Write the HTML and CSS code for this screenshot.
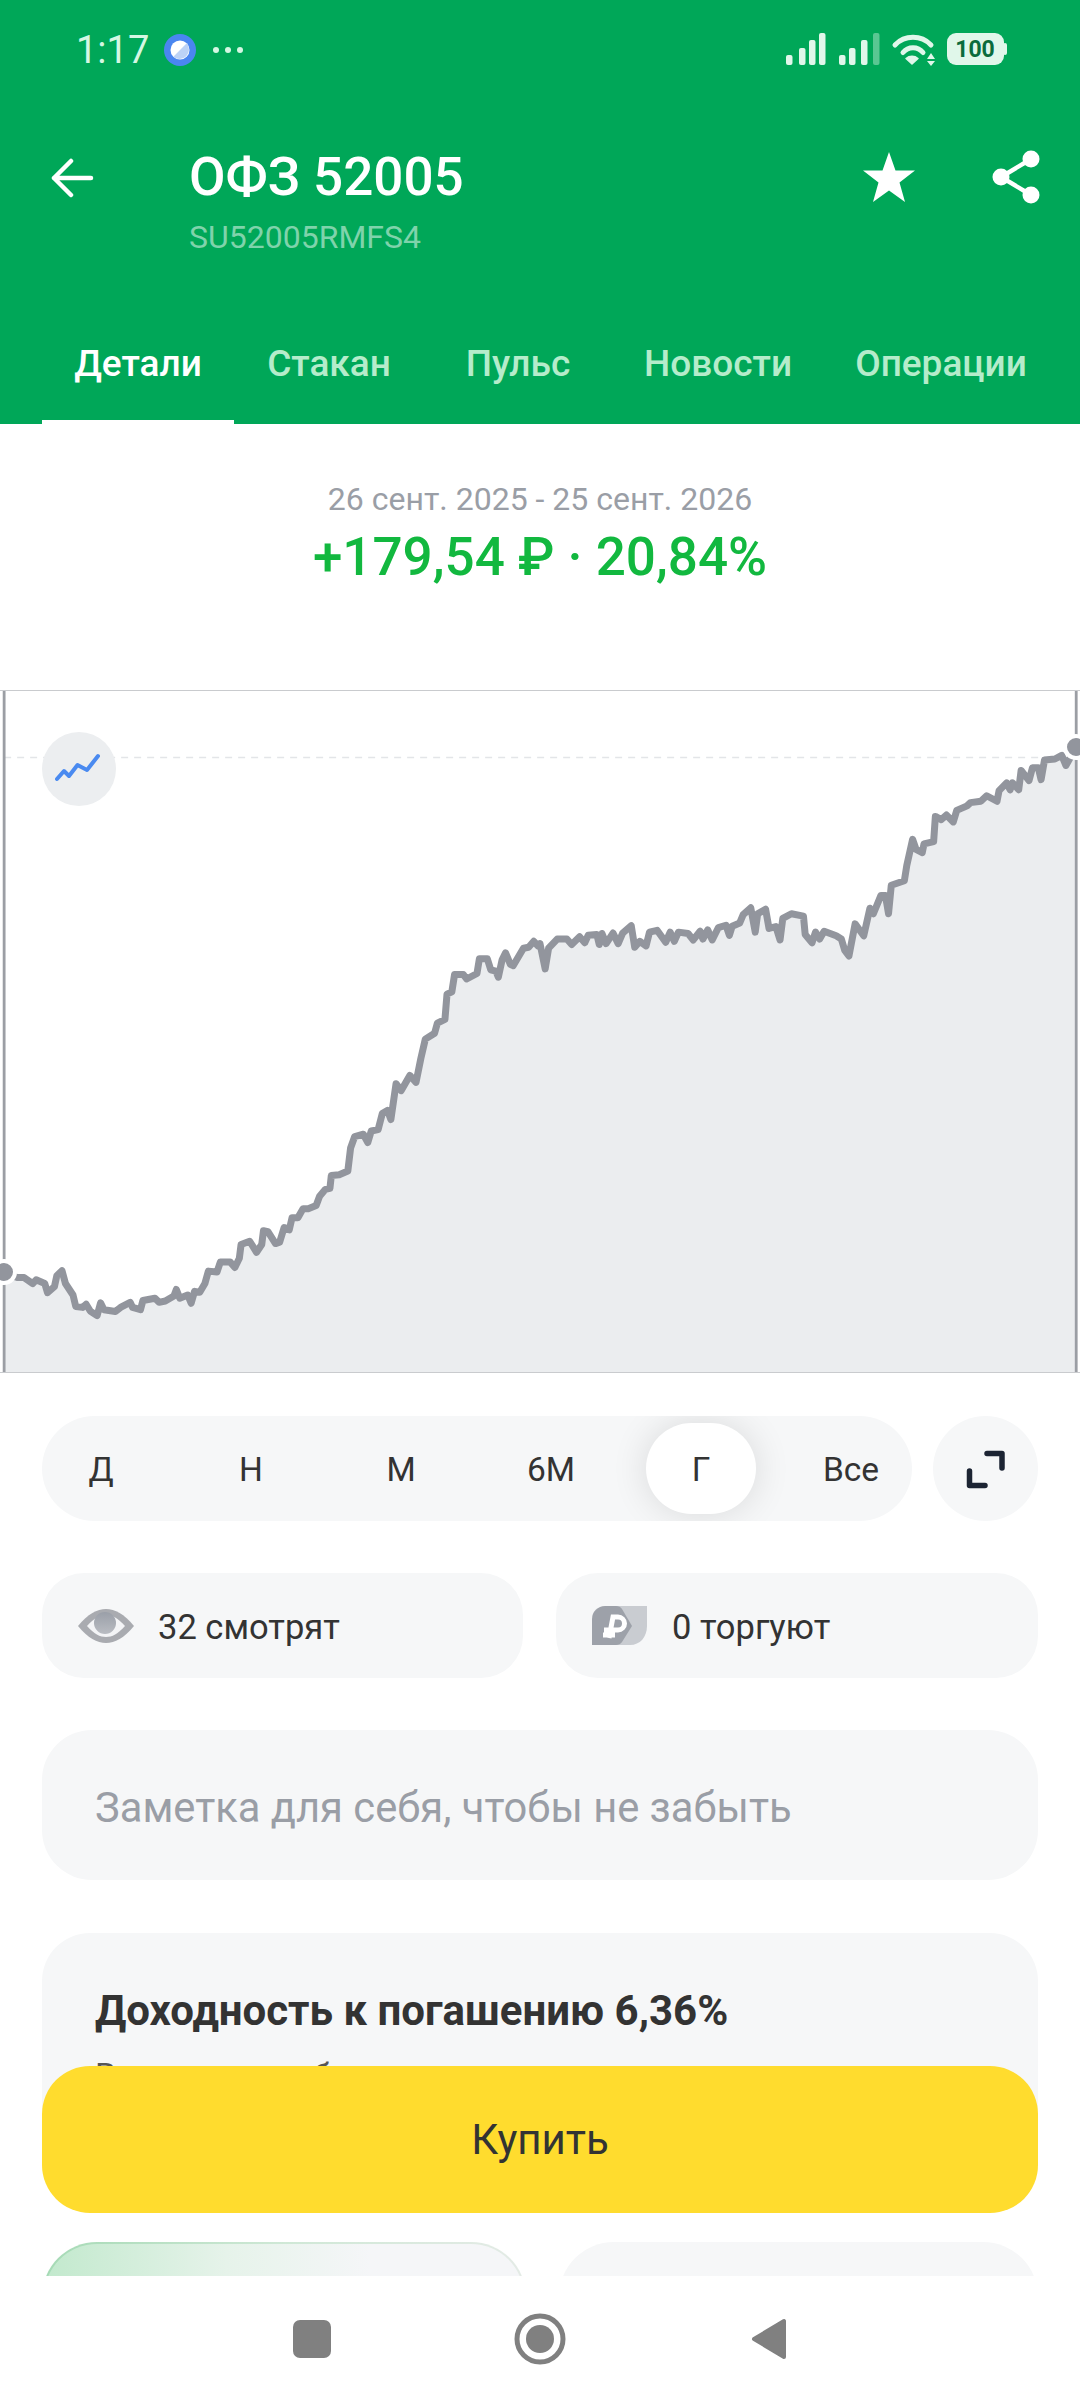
FILE: index.html
```html
<!DOCTYPE html>
<html lang="ru">
<head>
    <meta charset="UTF-8">
    <meta name="viewport" content="width=device-width, initial-scale=1.0">
    <title>ОФЗ 52005</title>
    <link rel="stylesheet" href="styles.css">
</head>
<body>
    <div class="screen">
        <div class="main">
            <header class="header">
                <div class="statusbar">
                    <div class="status-left">
                        <span class="clock">1:17</span>
                        <svg class="status-app" width="32" height="32" viewBox="0 0 32 32">
                            <circle cx="16" cy="16" r="16" fill="#4a86f0"/>
                            <circle cx="16" cy="16" r="9.5" fill="#fff"/>
                            <path d="M22.7 9.3A9.5 9.5 0 0 1 9.3 22.7Z" fill="#bcd2f6"/>
                        </svg>
                        <svg class="status-dots" width="32" height="8" viewBox="0 0 32 8">
                            <circle cx="4" cy="4" r="3" fill="#d5f7e3"/>
                            <circle cx="16" cy="4" r="3" fill="#d5f7e3"/>
                            <circle cx="28" cy="4" r="3" fill="#d5f7e3"/>
                        </svg>
                    </div>
                    <svg width="280" height="60" viewBox="0 0 280 60">
                        <g fill="#e0f7ea">
                            <rect x="26" y="35" width="6.5" height="10" rx="2"/>
                            <rect x="39" y="28" width="6.5" height="17" rx="2"/>
                            <rect x="49" y="20" width="6.5" height="25" rx="2"/>
                            <rect x="59" y="13" width="6.5" height="32" rx="2"/>
                            <rect x="79" y="35" width="6.5" height="10" rx="2"/>
                            <rect x="89" y="28" width="6.5" height="17" rx="2"/>
                            <rect x="101" y="20" width="6.5" height="25" rx="2"/>
                            <rect x="113" y="13" width="6.5" height="32" rx="2" opacity=".4"/>
                            <path d="M152 44 146 38.500A9.500 9.500 0 0 1 158 38.500Z" stroke="#e0f7ea" stroke-width="1.500" stroke-linejoin="round"/>
                            <path d="M167 39 171 33 175 39ZM167 41H175L171 46Z"/>
                            <rect x="187" y="13" width="57" height="32" rx="9"/>
                            <rect x="243" y="23" width="4" height="12" rx="2"/>
                        </g>
                        <g fill="none" stroke="#e0f7ea" stroke-width="5" stroke-linecap="round">
                            <path d="M135 25A25 25 0 0 1 171 25"/>
                            <path d="M143 32.500A13 13 0 0 1 163 32.500"/>
                        </g>
                        <text class="battery-level" x="215" y="37">100</text>
                    </svg>
                </div>

                <div class="title-row">
                    <svg class="back" width="44" height="40" viewBox="0 0 44 40">
                        <path d="M4 20H41M21 3 4 20 21 37" fill="none" stroke="#fff" stroke-width="4.500" stroke-linecap="round" stroke-linejoin="round"/>
                    </svg>
                    <div class="title-text">
                        <h1>ОФЗ 52005</h1>
                        <p>SU52005RMFS4</p>
                    </div>
                    <div class="actions">
                        <svg class="star" width="52" height="50" viewBox="0 0 52 50">
                            <path d="M26 0 32.500 18.500H52L36.500 30.500 42 50 26 38.500 10 50 15.500 30.500 0 18.500H19.500Z" fill="#fff"/>
                        </svg>
                        <svg width="48" height="54" viewBox="0 0 48 54">
                            <g fill="#fff">
                                <circle cx="39" cy="9" r="8.500"/>
                                <circle cx="9" cy="27" r="8.500"/>
                                <circle cx="39" cy="45" r="8.500"/>
                            </g>
                            <path d="M39 9 9 27 39 45" fill="none" stroke="#fff" stroke-width="4.500"/>
                        </svg>
                    </div>
                </div>

                <nav class="tabs">
                    <a class="tab active">Детали</a>
                    <a class="tab">Стакан</a>
                    <a class="tab">Пульс</a>
                    <a class="tab">Новости</a>
                    <a class="tab">Операции</a>
                </nav>
            </header>

            <section class="range">
                <div class="range-dates">26 сент. 2025 - 25 сент. 2026</div>
                <div class="range-value">+179,54 ₽ · 20,84%</div>
            </section>

            <section class="chart">
                <svg class="chart-plot" width="1080" height="683" viewBox="0 45 3136 1487" preserveAspectRatio="none">
                    <path class="chart-area" d="M12 1312L50 1322L70 1322L95 1335L105 1327L130 1335L138 1355L158 1342L165 1318L180 1307L190 1335L212 1360L220 1385L240 1387L250 1380L262 1395L282 1405L292 1377L302 1392L335 1396L350 1387L378 1376L385 1387L408 1392L415 1372L450 1367L462 1376L480 1373L505 1362L512 1348L522 1367L545 1360L555 1378L565 1352L580 1354L595 1335L605 1308L630 1310L640 1288L668 1288L682 1300L695 1280L700 1250L725 1243L745 1267L760 1250L765 1220L778 1222L800 1248L812 1245L825 1213L840 1218L848 1192L865 1192L880 1172L895 1172L918 1165L928 1145L945 1130L958 1128L962 1100L985 1098L1010 1090L1018 1040L1030 1015L1055 1010L1068 1028L1078 1003L1098 1000L1110 965L1125 958L1135 978L1150 900L1165 915L1190 882L1208 897L1222 845L1235 803L1262 790L1270 768L1292 760L1298 705L1312 700L1320 662L1345 662L1355 672L1385 660L1392 628L1415 628L1425 652L1440 655L1447 668L1458 630L1468 615L1482 640L1490 643L1520 605L1535 603L1550 590L1562 600L1568 595L1583 650L1593 605L1618 585L1646 585L1660 597L1683 580L1698 593L1708 577L1733 575L1740 597L1748 573L1760 595L1780 572L1795 595L1808 572L1833 556L1843 603L1858 590L1876 600L1886 570L1908 566L1933 592L1946 570L1958 590L1970 570L1998 573L2013 587L2033 568L2041 585L2055 565L2068 587L2086 560L2108 555L2118 577L2126 557L2148 550L2158 532L2180 517L2193 570L2200 530L2223 520L2233 562L2253 558L2265 587L2273 540L2298 530L2333 535L2338 575L2358 593L2368 570L2380 585L2393 568L2428 578L2443 585L2453 610L2465 622L2483 552L2508 578L2526 518L2536 530L2558 490L2571 490L2580 530L2588 468L2626 458L2633 425L2650 368L2660 390L2678 397L2683 378L2711 373L2716 318L2733 325L2748 315L2768 330L2778 305L2808 295L2818 288L2848 285L2865 273L2895 285L2901 262L2923 245L2933 260L2940 245L2958 260L2965 218L2988 240L2998 212L3015 212L3023 238L3033 195L3063 193L3083 185L3095 207L3108 190L3123 170V1531H12Z"/>
                    <path class="chart-guide" d="M12 190H3125"/>
                    <path class="chart-axis" d="M12 45V1531M3125 45V1531"/>
                    <path class="chart-line" d="M12 1312L50 1322L70 1322L95 1335L105 1327L130 1335L138 1355L158 1342L165 1318L180 1307L190 1335L212 1360L220 1385L240 1387L250 1380L262 1395L282 1405L292 1377L302 1392L335 1396L350 1387L378 1376L385 1387L408 1392L415 1372L450 1367L462 1376L480 1373L505 1362L512 1348L522 1367L545 1360L555 1378L565 1352L580 1354L595 1335L605 1308L630 1310L640 1288L668 1288L682 1300L695 1280L700 1250L725 1243L745 1267L760 1250L765 1220L778 1222L800 1248L812 1245L825 1213L840 1218L848 1192L865 1192L880 1172L895 1172L918 1165L928 1145L945 1130L958 1128L962 1100L985 1098L1010 1090L1018 1040L1030 1015L1055 1010L1068 1028L1078 1003L1098 1000L1110 965L1125 958L1135 978L1150 900L1165 915L1190 882L1208 897L1222 845L1235 803L1262 790L1270 768L1292 760L1298 705L1312 700L1320 662L1345 662L1355 672L1385 660L1392 628L1415 628L1425 652L1440 655L1447 668L1458 630L1468 615L1482 640L1490 643L1520 605L1535 603L1550 590L1562 600L1568 595L1583 650L1593 605L1618 585L1646 585L1660 597L1683 580L1698 593L1708 577L1733 575L1740 597L1748 573L1760 595L1780 572L1795 595L1808 572L1833 556L1843 603L1858 590L1876 600L1886 570L1908 566L1933 592L1946 570L1958 590L1970 570L1998 573L2013 587L2033 568L2041 585L2055 565L2068 587L2086 560L2108 555L2118 577L2126 557L2148 550L2158 532L2180 517L2193 570L2200 530L2223 520L2233 562L2253 558L2265 587L2273 540L2298 530L2333 535L2338 575L2358 593L2368 570L2380 585L2393 568L2428 578L2443 585L2453 610L2465 622L2483 552L2508 578L2526 518L2536 530L2558 490L2571 490L2580 530L2588 468L2626 458L2633 425L2650 368L2660 390L2678 397L2683 378L2711 373L2716 318L2733 325L2748 315L2768 330L2778 305L2808 295L2818 288L2848 285L2865 273L2895 285L2901 262L2923 245L2933 260L2940 245L2958 260L2965 218L2988 240L2998 212L3015 212L3023 238L3033 195L3063 193L3083 185L3095 207L3108 190L3123 170"/>
                </svg>
                <span class="chart-dot chart-dot-start"></span>
                <span class="chart-dot chart-dot-end"></span>
                <span class="chart-type">
                    <svg width="74" height="74" viewBox="0 0 74 74">
                        <path d="M15 47 22 39 27 44 35.500 33 45 38 56 24" fill="none" stroke="#4a8af0" stroke-width="4" stroke-linecap="round" stroke-linejoin="round"/>
                    </svg>
                </span>
            </section>

            <div class="periods-row">
                <div class="periods">
                    <span class="period">Д</span>
                    <span class="period">Н</span>
                    <span class="period">М</span>
                    <span class="period">6М</span>
                    <span class="period selected">Г</span>
                    <span class="period">Все</span>
                </div>
                <div class="expand">
                    <svg width="40" height="40" viewBox="0 0 40 40">
                        <path d="M21 4.500H36V19M3.500 22V36.500H19" fill="none" stroke="#1c2433" stroke-width="5.500" stroke-linecap="round" stroke-linejoin="round"/>
                    </svg>
                </div>
            </div>

            <div class="stats">
                <div class="stat">
                    <svg width="58" height="36" viewBox="0 0 58 36">
                        <defs>
                            <linearGradient id="pupil" x1="0" y1="0" x2="0" y2="1">
                                <stop offset="0" stop-color="#9a9fa8"/>
                                <stop offset="1" stop-color="#b9bcc2"/>
                            </linearGradient>
                        </defs>
                        <path d="M1 18C11 6 20 1 29 1S47 6 57 18C47 30 38 35 29 35S11 30 1 18Z" fill="#a9abb0"/>
                        <path d="M10 18C17 10 23 7 29 7S41 10 48 18C41 26 35 29 29 29S17 26 10 18Z" fill="#f3f4f6"/>
                        <circle cx="28" cy="15" r="11" fill="url(#pupil)"/>
                    </svg>
                    <span class="stat-label">32 смотрят</span>
                </div>
                <div class="stat stat-trade">
                    <svg width="55" height="39" viewBox="0 0 55 39">
                        <path d="M20 0H55V20C55 31 48 39 38 39H20Z" fill="#c9ccd1"/>
                        <path d="M13 0H24Q28 0 30 3L40 20 30 36Q28 39 24 39H0V13A13 13 0 0 1 13 0Z" fill="#9da1a9"/>
                        <path d="M17 32 21 11H26A6.500 6.500 0 0 1 26 24H12M11 29H23" fill="none" stroke="#fff" stroke-width="5"/>
                    </svg>
                    <span class="stat-label">0 торгуют</span>
                </div>
            </div>

            <div class="note">Заметка для себя, чтобы не забыть</div>

            <div class="card">
                <h2>Доходность к погашению 6,36%</h2>
                <p>Вложения в облигацию</p>
            </div>

            <div class="tiles">
                <div class="tile tile-green"></div>
                <div class="tile"></div>
            </div>

            <button class="buy">Купить</button>
        </div>

        <div class="navbar">
            <svg width="60" height="60" viewBox="0 0 60 60">
                <rect x="11" y="11" width="38" height="38" rx="7" fill="#808080"/>
            </svg>
            <svg width="60" height="60" viewBox="0 0 60 60">
                <circle cx="30" cy="30" r="23" fill="none" stroke="#808080" stroke-width="5"/>
                <circle cx="30" cy="30" r="14" fill="#808080"/>
            </svg>
            <svg width="60" height="60" viewBox="0 0 60 60">
                <path d="M46 12V48L16 30Z" fill="#808080" stroke="#808080" stroke-width="4" stroke-linejoin="round"/>
            </svg>
        </div>
    </div>
</body>
</html>
```

FILE: styles.css
```css
* {
    box-sizing: border-box;
}

body {
    margin: 0;
    font-family: Roboto, "Noto Sans", sans-serif;
    background-color: #fff;
    color: #333;
}

.screen {
    width: 1080px;
    height: 2400px;
    overflow: hidden;
    display: flex;
    flex-direction: column;
}

.main {
    position: relative;
    height: 2276px;
    overflow: hidden;
}

/* green header */
.header {
    height: 424px;
    background-color: #00a758;
    color: #fff;
}

.statusbar {
    height: 100px;
    padding: 0 40px 0 76px;
    display: flex;
    align-items: center;
    justify-content: space-between;
}

.status-left {
    display: flex;
    align-items: center;
}

.clock {
    font-size: 38px;
    color: #d5f7e3;
}

.status-app {
    margin-left: 15px;
}

.status-dots {
    margin-left: 16px;
}

.battery-level {
    font-size: 23px;
    font-weight: 700;
    fill: #0b6b3c;
    text-anchor: middle;
}

.title-row {
    display: flex;
    align-items: flex-start;
    padding: 47px 40px 0 50px;
}

.back {
    margin: 11px 95px 0 0;
}

.title-text {
    flex: 1;
}

.title-text h1 {
    margin: 0;
    font-size: 53px;
    line-height: 60px;
    font-weight: 500;
}

.title-text p {
    margin: 10px 0 0;
    font-size: 32px;
    line-height: 40px;
    color: #7fd3ab;
}

.actions {
    display: flex;
    align-items: center;
    gap: 77px;
    margin-top: 3px;
}

.tabs {
    height: 122px;
    margin-top: 45px;
    padding-left: 42px;
    display: grid;
    grid-template-columns: 192px 190px 188px 212px 234px;
}

.tab {
    padding-top: 4px;
    display: flex;
    align-items: center;
    justify-content: center;
    font-size: 37px;
    font-weight: 500;
    color: #b5eccb;
    border-bottom: 4px solid transparent;
}

.tab.active {
    color: #fff;
    border-bottom-color: #fff;
}

/* period result */
.range {
    padding: 55px 0 103px;
    text-align: center;
}

.range-dates {
    font-size: 32px;
    line-height: 40px;
    color: #9a9ea6;
}

.range-value {
    margin-top: 8px;
    font-size: 53px;
    line-height: 60px;
    font-weight: 500;
    color: #12b83f;
}

/* chart */
.chart {
    position: relative;
    height: 683px;
    border-top: 1px solid #c9cbce;
    border-bottom: 1px solid #c9cbce;
    overflow: hidden;
}

.chart-plot {
    display: block;
}

.chart-area {
    fill: #ebedef;
}

.chart-guide {
    fill: none;
    stroke: #e3e5e8;
    stroke-width: 1.500;
    stroke-dasharray: 7 6;
    vector-effect: non-scaling-stroke;
}

.chart-axis {
    fill: none;
    stroke: #9b9ea4;
    stroke-width: 2.800;
    vector-effect: non-scaling-stroke;
}

.chart-line {
    fill: none;
    stroke: #92959d;
    stroke-width: 7;
    stroke-linejoin: round;
    stroke-linecap: round;
    vector-effect: non-scaling-stroke;
}

.chart-dot {
    position: absolute;
    width: 26px;
    height: 26px;
    border-radius: 50%;
    background-color: #92959d;
    border: 4px solid #fff;
}

.chart-dot-start {
    left: -9px;
    top: 568px;
}

.chart-dot-end {
    left: 1063px;
    top: 43px;
}

.chart-type {
    position: absolute;
    left: 42px;
    top: 41px;
    width: 74px;
    height: 74px;
    border-radius: 50%;
    background-color: #eceef0;
}

/* period switch */
.periods-row {
    margin-top: 43px;
    padding: 0 42px;
    display: flex;
    justify-content: space-between;
}

.periods {
    width: 870px;
    height: 105px;
    padding: 7px 6px 7px 4px;
    display: flex;
    gap: 40px;
    border-radius: 53px;
    background-color: #f6f7f8;
    overflow: hidden;
}

.period {
    width: 110px;
    padding-top: 2px;
    display: flex;
    align-items: center;
    justify-content: center;
    font-size: 33.500px;
    border-radius: 46px;
}

.period.selected {
    background-color: #fff;
    box-shadow: 0 0 36px rgba(0, 0, 0, 0.12);
}

.expand {
    width: 105px;
    height: 105px;
    display: flex;
    align-items: center;
    justify-content: center;
    border-radius: 50%;
    background-color: #f6f7f8;
}

/* stats */
.stats {
    margin-top: 52px;
    padding: 0 42px;
    display: flex;
    gap: 33px;
}

.stat {
    flex: 1;
    height: 105px;
    padding-left: 35px;
    display: flex;
    align-items: center;
    gap: 23px;
    border-radius: 42px;
    background-color: #f6f7f8;
    font-size: 34.500px;
}

.stat-label {
    margin-top: 2px;
}

.stat-trade {
    padding-left: 36px;
    gap: 25px;
}

.note {
    height: 150px;
    margin: 52px 42px 0;
    padding: 4px 53px 0;
    display: flex;
    align-items: center;
    border-radius: 50px;
    background-color: #f6f7f8;
    font-size: 41.700px;
    color: #9a9ea6;
}

.card {
    height: 276px;
    margin: 53px 42px 0;
    padding: 55px 53px 0;
    border-radius: 48px;
    background-color: #f6f7f8;
}

.card h2 {
    margin: 0;
    font-size: 42px;
    line-height: 46px;
    font-weight: 700;
}

.card p {
    margin: 21px 0 0;
    font-size: 34px;
    line-height: 40px;
    color: #555;
}

.tiles {
    margin-top: 33px;
    padding: 0 42px;
    display: flex;
    gap: 33px;
}

.tile {
    flex: 1;
    height: 200px;
    border-radius: 55px;
    background-color: #f6f7f8;
}

.tile-green {
    border: 2px solid transparent;
    background:
        linear-gradient(90deg, #c2e9cd, #e6f3ea 38%, #f5f6f8 68%) padding-box,
        linear-gradient(90deg, #a5dab5, #cfe8d6 50%, #e4ebe6) border-box;
}

.buy {
    position: absolute;
    left: 42px;
    right: 42px;
    bottom: 63px;
    height: 147px;
    border: none;
    border-radius: 48px;
    background-color: #ffdc2e;
    font-family: inherit;
    font-size: 42px;
    color: #333;
}

/* android nav bar */
.navbar {
    height: 124px;
    padding-top: 1px;
    display: flex;
    align-items: center;
    justify-content: center;
    gap: 168px;
}
```
